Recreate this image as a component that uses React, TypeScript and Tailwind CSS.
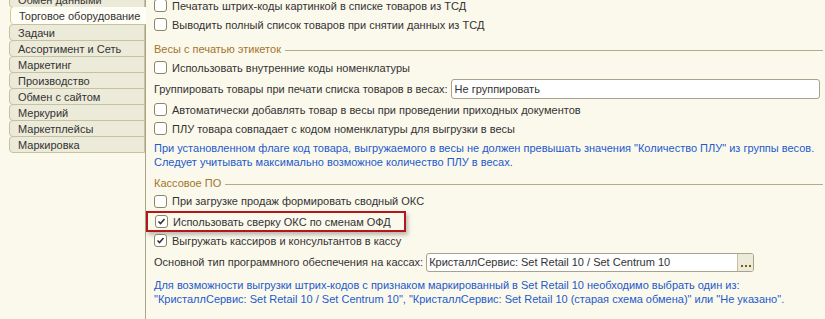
import React from "react";

const Box = ({ checked = false }: { checked?: boolean }) => (
  <span className="w-[13px] h-[13px] shrink-0 rounded-[3px] border border-[#8c8669] bg-white flex items-center justify-center">
    {checked && (
      <svg width="9" height="9" viewBox="0 0 9 9">
        <path d="M1.5 4.5 L3.5 6.5 L7.5 2" fill="none" stroke="#333" strokeWidth="1.6" />
      </svg>
    )}
  </span>
);

const Row = ({ text, checked = false, h = "h-[19px]" }: { text: string; checked?: boolean; h?: string }) => (
  <div className={`${h} flex items-center gap-[5px]`}>
    <Box checked={checked} />
    <span className="whitespace-nowrap">{text}</span>
  </div>
);

const Header = ({ text, cls }: { text: string; cls: string }) => (
  <div className={`${cls} h-[16px] flex items-center gap-[4px] pr-[2px]`}>
    <span className="text-[#a4742c] whitespace-nowrap">{text}</span>
    <span className="flex-1 h-px bg-[#b3ab8a] mt-[3px]" />
  </div>
);

const tabs = [
  "Обмен данными",
  "Торговое оборудование",
  "Задачи",
  "Ассортимент и Сеть",
  "Маркетинг",
  "Производство",
  "Обмен с сайтом",
  "Меркурий",
  "Маркетплейсы",
  "Маркировка",
];

export default function App() {
  return (
    <div
      className="w-[825px] h-[319px] overflow-hidden bg-[#fbf9ec] flex text-[#333] text-[11px] leading-[14px]"
      style={{ fontFamily: '"Liberation Sans", Arial, sans-serif' }}
    >
      <div className="w-[145px] shrink-0 pl-[9px] flex flex-col -mt-[9px]">
        {tabs.map((t, i) =>
          i === 1 ? (
            <div
              key={t}
              className="h-[17px] -mr-px ml-px pl-[8px] flex items-center bg-[#fefdf6] border-l border-[#d9c690] rounded-l-[4px] relative z-10 whitespace-nowrap"
            >
              {t}
            </div>
          ) : (
            <div
              key={t}
              className="h-[17px] pl-[8px] flex items-center bg-[#ecead9] border border-[#c6c1a0] rounded-l-[4px] -mb-px whitespace-nowrap"
            >
              {t}
            </div>
          )
        )}
      </div>
      <div className="flex-1 border-l border-[#aaa488] pl-[8px] flex flex-col">
        <div className="-mt-[4px]">
          <Row text="Печатать штрих-коды картинкой в списке товаров из ТСД" />
        </div>
        <Row text="Выводить полный список товаров при снятии данных из ТСД" />
        <Header text="Весы с печатью этикеток" cls="mt-[7px] mb-[1px]" />
        <Row text="Использовать внутренние коды номенклатуры" />
        <div className="h-[22px] mt-[1px] flex items-center gap-[3px] pr-[5px]">
          <span className="whitespace-nowrap">Группировать товары при печати списка товаров в весах:</span>
          <div className="flex-1 h-[20px] bg-white border border-[#a8a28a] rounded-[3px] flex items-center pl-[3px]">
            Не группировать
          </div>
        </div>
        <Row text="Автоматически добавлять товар в весы при проведении приходных документов" />
        <Row text="ПЛУ товара совпадает с кодом номенклатуры для выгрузки в весы" />
        <div className="mt-[3px] text-[#2359cc] leading-[14px]">
          <div className="whitespace-nowrap">
            При установленном флаге код товара, выгружаемого в весы не должен превышать значения "Количество ПЛУ" из группы весов.
          </div>
          <div className="whitespace-nowrap">Следует учитывать максимально возможное количество ПЛУ в весах.</div>
        </div>
        <Header text="Кассовое ПО" cls="mt-[6px]" />
        <Row text="При загрузке продаж формировать сводный ОКС" h="h-[20px]" />
        <div className="-ml-[8px] w-[260px] h-[21px] border-2 border-[#b5161b] pl-[7px] flex items-center gap-[5px] shadow-[2px_3px_4px_rgba(0,0,0,0.25)]">
          <Box checked />
          <span className="whitespace-nowrap">Использовать сверку ОКС по сменам ОФД</span>
        </div>
        <Row text="Выгружать кассиров и консультантов в кассу" checked h="h-[17px]" />
        <div className="h-[22px] mt-[2px] flex items-center gap-[3px]">
          <span className="whitespace-nowrap">Основной тип программного обеспечения на кассах:</span>
          <div className="w-[328px] h-[19px] bg-white border border-[#a8a28a] rounded-[3px] flex items-stretch overflow-hidden">
            <div className="flex-1 flex items-center pl-[2px] whitespace-nowrap">
              КристаллСервис: Set Retail 10 / Set Centrum 10
            </div>
            <div className="w-[16px] bg-[#ecead9] border-l border-[#c6c1a0] flex items-end justify-center pb-[4px] gap-[2px]">
              <span className="w-[2px] h-[2px] bg-[#7a5c10]" />
              <span className="w-[2px] h-[2px] bg-[#7a5c10]" />
              <span className="w-[2px] h-[2px] bg-[#7a5c10]" />
            </div>
          </div>
        </div>
        <div className="mt-[5px] text-[#2359cc] leading-[14px]">
          <div className="whitespace-nowrap">
            Для возможности выгрузки штрих-кодов с признаком маркированный в Set Retail 10 необходимо выбрать один из:
          </div>
          <div className="whitespace-nowrap">
            "КристаллСервис: Set Retail 10 / Set Centrum 10", "КристаллСервис: Set Retail 10 (старая схема обмена)" или "Не указано".
          </div>
        </div>
      </div>
    </div>
  );
}
